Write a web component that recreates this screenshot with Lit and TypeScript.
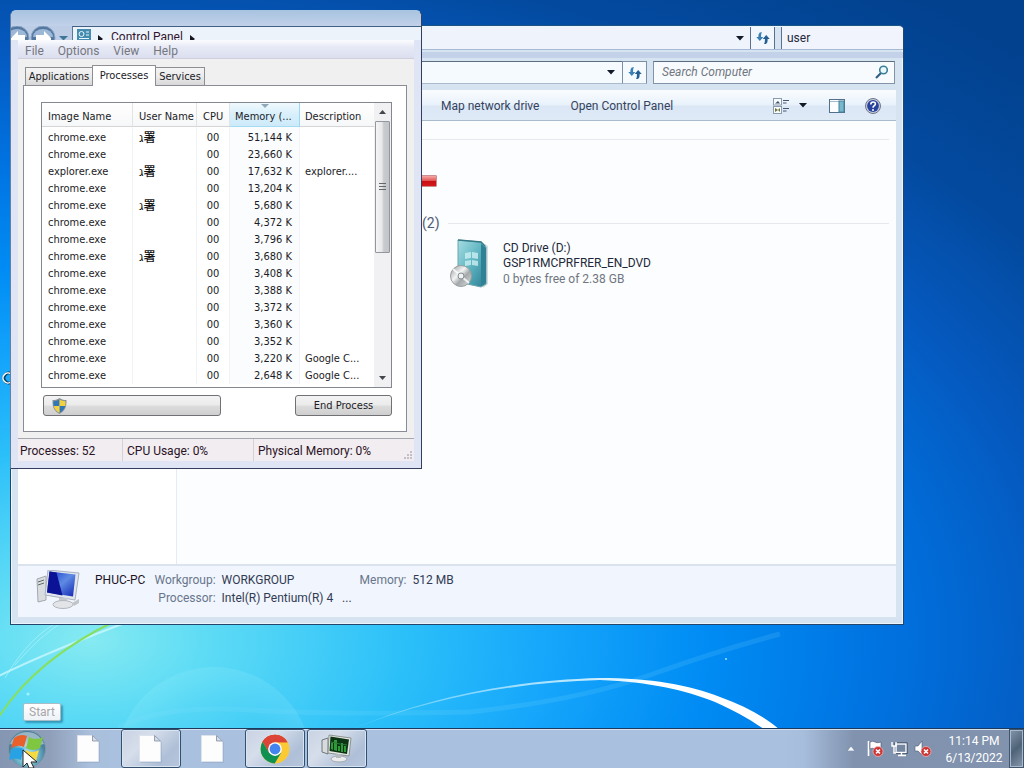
import { LitElement, html, css, svg } from "lit";
import { customElement } from "lit/decorators.js";

interface Proc { image: string; user?: boolean; memory: string; description?: string; }

const processes: Proc[] = [
  { image: "chrome.exe", user: true, memory: "51,144 K" },
  { image: "chrome.exe", memory: "23,660 K" },
  { image: "explorer.exe", user: true, memory: "17,632 K", description: "explorer...." },
  { image: "chrome.exe", memory: "13,204 K" },
  { image: "chrome.exe", user: true, memory: "5,680 K" },
  { image: "chrome.exe", memory: "4,372 K" },
  { image: "chrome.exe", memory: "3,796 K" },
  { image: "chrome.exe", user: true, memory: "3,680 K" },
  { image: "chrome.exe", memory: "3,408 K" },
  { image: "chrome.exe", memory: "3,388 K" },
  { image: "chrome.exe", memory: "3,372 K" },
  { image: "chrome.exe", memory: "3,360 K" },
  { image: "chrome.exe", memory: "3,352 K" },
  { image: "chrome.exe", memory: "3,220 K", description: "Google C..." },
  { image: "chrome.exe", memory: "2,648 K", description: "Google C..." },
];

const caret = html`<svg width="8" height="5" viewBox="0 0 8 5" aria-hidden="true"><path d="M0 0h8L4 4.5z" fill="#111827"/></svg>`;
const refresh = html`<svg width="14" height="14" viewBox="0 0 14 14" aria-hidden="true">
  <path d="M6 1.200C3 .8 2.200 3 2.400 6H.3l3.500 4 3.500-4H5.100c-.1-2 0-3.400.9-4.800z" fill="#3a80b4"/>
  <path d="M8 13c3 .4 3.800-1.800 3.600-5h2.100l-3.500-4-3.500 4h2.200c.1 2 0 3.600-.9 5z" fill="#235f94"/></svg>`;
const blankPage = html`<svg width="24" height="28" viewBox="0 0 24 28" aria-hidden="true">
  <path d="M1.500 1.500H16L22.500 7v20.500h-21z" fill="#8296b4" opacity=".6"/>
  <path d="M.5.5H15.500L21.500 6v20.500H.5z" fill="#fdfdfe" stroke="#dde3ec"/>
  <path d="M15.500.5V6h6z" fill="#d5dde9" stroke="#7d8da5" stroke-width=".8"/></svg>`;
const redCross = svg`<circle cx="12" cy="11.500" r="5" fill="#cf3535" stroke="#f0c0c0" stroke-width=".7"/><path d="M10 9.500l4 4m0-4l-4 4" stroke="#fff" stroke-width="1.600"/>`;

@customElement("desktop-wallpaper")
class DesktopWallpaper extends LitElement {
  static styles = css`
    :host { display: block; width: 100%; height: 100%; overflow: hidden;
      background: radial-gradient(ellipse 1120px 680px at 90px 640px, #86eaf1 0, #5fdcf5 10%, #2cc0f9 28%, #16a6fb 41%, #008cf4 55%, #0072e0 71%, #0558bd 88%, #034a9f 102%, #02418e 120%); }
    svg { display: block; width: 100%; height: 100%; }
  `;
  render() {
    return html`<svg viewBox="0 0 1024 728" preserveAspectRatio="xMinYMax slice" fill="none" aria-hidden="true">
      <defs>
        <linearGradient id="arc" x1="350" y1="0" x2="780" y2="0" gradientUnits="userSpaceOnUse"><stop stop-color="#fff" stop-opacity=".15"/><stop offset=".5" stop-color="#dff8ff" stop-opacity=".8"/><stop offset=".7" stop-color="#fff"/></linearGradient>
        <radialGradient id="dome" cx="214" cy="765" r="98" gradientUnits="userSpaceOnUse"><stop offset=".6" stop-color="#aef4ff" stop-opacity="0"/><stop offset="1" stop-color="#aef4ff" stop-opacity=".15"/></radialGradient>
      </defs>
      <ellipse cx="214" cy="765" rx="98" ry="98" fill="url(#dome)"/>
      <path d="M-5 678Q40 655 135 619" stroke="#d5fbff" stroke-width="2" opacity=".7"/>
      <path d="M5 678Q30 635 62 620M15 665Q40 635 66 620" stroke="#c8f8ff" opacity=".5"/>
      <path d="M-2 718Q35 660 115 621" stroke="#87df62" stroke-width="2"/>
      <path d="M118 728Q160 705 250 710T470 712Q580 700 650 675T780 634" stroke="#8fe0ff" stroke-width="5" opacity=".14"/>
      <path d="M345 732C430 695 520 680 600 678C650 678 690 685 720 697C745 706 765 717 780 730L768 732C750 719 735 711 715 702C685 690 650 682 600 680C520 682 430 697 345 732z" fill="url(#arc)"/>
      <circle cx="726" cy="659" r="1" fill="#a5e2ff"/><circle cx="28" cy="694" r="1.500" fill="#a5f2ff"/>
      <path d="M12 374a5 5 0 1 0 0 8" stroke="#0b3f60" stroke-width="3"/><path d="M11 374a5 5 0 1 0 0 8" stroke="#fff" stroke-width="1.500"/>
    </svg>`;
  }
}

@customElement("explorer-window")
class ExplorerWindow extends LitElement {
  static styles = css`
    :host { display: flex; flex-direction: column; box-sizing: border-box; border: 1px solid #24456c; border-top-color: #1c5584; border-radius: 0 5px 0 0; background: #d6e3f1; box-shadow: inset 0 0 0 1px #eaf5fc; font: 12px/16px Roboto, sans-serif; color: #1e2939; overflow: hidden; }
    button, input { font: inherit; color: inherit; margin: 0; border: 0; padding: 0; background: none; }
    button { display: flex; align-items: center; justify-content: center; }
    .ghost { display: flex; height: 22px; margin-top: 1px; flex: none; border-bottom: 1px solid #a6b9d5; }
    .field { flex: 1; display: flex; justify-content: flex-end; background: #eff3fc; }
    .caret { width: 23px; }
    .reload { width: 25px; border-left: 1px solid #5a718e; border-right: 1px solid #5a718e; background: #f2f6fd; box-sizing: border-box; }
    .user { width: 122px; box-sizing: border-box; margin-left: 6px; padding: 0 5px; background: #f1f4fd; border-left: 1px solid #5a718e; outline: 0; }
    .ghost .reload { margin-left: -1px; }
    .band { height: 6px; flex: none; background: #c3d2e9; margin-top: 2px; }
    .address { display: flex; height: 23px; margin: 3px 8px 6px 8px; flex: none; }
    .address .field { background: #f5fafe; border-top: 1px solid #5d6d80; border-bottom: 1px solid #a9bbcc; }
    .address .reload { border: 1px solid #7d8fa5; border-bottom-color: #a9bbcc; background: #f5fafe; }
    .search { display: flex; align-items: center; width: 242px; box-sizing: border-box; margin-left: 6px; padding: 0 5px 1px 8px; border: 1px solid #8394a8; border-top-color: #5d6d80; background: #f8fbfe; }
    .search input { flex: 1; min-width: 0; font-style: italic; outline: 0; }
    .search input::placeholder { color: #707780; opacity: 1; }
    .tools { display: flex; align-items: center; height: 31px; flex: none; box-sizing: border-box; margin: 0 7px; padding: 0 15px 0 423px; border-top: 1px solid #f9fcff; border-bottom: 1px solid #a8bccd; background: linear-gradient(#f9fcfe, #e8f1fb 48%, #dbe7f5 52%, #dfeaf7); color: #34435e; }
    .tools .gap { flex: 1; }
    .tools .open { margin-left: 31px; }
    .tools .drop { margin: 0 22px 0 9px; }
    .tools .help { margin-left: 20px; }
    .body { display: flex; flex: 1; min-height: 0; margin: 0 7px; background: #fcfdfe; }
    .nav { width: 159px; box-sizing: border-box; border-right: 1px solid #e3ebf4; background: #fff; }
    .pane { flex: 1; padding: 18px 7px 0 0; background: #fcfdfe; }
    .rule { height: 1px; background: #e5e9ed; }
    .usage { display: block; width: 151px; height: 12px; box-sizing: border-box; margin: 35px 0 0 109px; border: 1px solid #c98f91; border-radius: 1px; background: linear-gradient(#f5a8a5, #e2595a 45%, #c80f14 50%, #d3191c); }
    .group { display: flex; align-items: center; gap: 8px; margin: 26px 0 0 245px; font-size: 14px; line-height: 20px; color: #4c5c78; }
    .group .rule { flex: 1; }
    .drive { display: flex; gap: 11px; margin: 5px 0 0 273px; }
    .drive p { margin: 3px 0 0; line-height: 15px; }
    .drive .free { margin: 1px 0 0; color: #707680; }
    .details { display: flex; flex: none; height: 51px; margin: 0 7px 7px; padding-left: 18px; border-top: 2px solid #dae3ee; background: #f1f5fd; color: #313b54; line-height: 18px; }
    .details svg { margin-top: 4px; }
    .name { margin: 5px 9px 0 15px; color: #1d1426; }
    .facts { display: grid; grid-template-columns: auto 132px auto auto; gap: 0 6px; align-content: start; margin: 5px 0 0; }
    .facts dt { color: #68758c; text-align: right; }
    .facts dd { margin: 0; white-space: pre; }
  `;
  render() {
    return html`
      <div class="ghost">
        <div class="field"><button class="caret" aria-label="Previous locations">${caret}</button></div>
        <button class="reload" aria-label="Refresh">${refresh}</button>
        <input class="user" aria-label="Search Control Panel" value="user">
      </div>
      <div class="band"></div>
      <div class="address">
        <div class="field"><button class="caret" aria-label="Previous locations">${caret}</button></div>
        <button class="reload" aria-label="Refresh">${refresh}</button>
        <div class="search"><input aria-label="Search Computer" placeholder="Search Computer">
          <svg width="14" height="14" viewBox="0 0 14 14" aria-hidden="true"><path d="M1 13l5-5" stroke="#2f5f80" stroke-width="2.200"/><circle cx="8.500" cy="5" r="3.800" fill="#eaf8fb" stroke="#3b7f9b" stroke-width="1.600"/></svg>
        </div>
      </div>
      <div class="tools">
        <button>Map network drive</button><button class="open">Open Control Panel</button><span class="gap"></span>
        <button aria-label="Change your view"><svg width="17" height="16" viewBox="0 0 17 16"><rect x=".5" y=".5" width="8" height="6.500" fill="#f8fbff" stroke="#8c9bab"/><path d="M2 5.500h5L5 3z" fill="#3f5270"/><rect x=".5" y="8.500" width="8" height="7" fill="#f8fbff" stroke="#8c9bab"/><path d="M2 10v4l3-2 2 2v-4l-2 2z" fill="#6c7335"/><path d="M10 2.500h6M10 5h3.500M10 10.500h6M10 13h3.500" stroke="#46566e"/></svg></button>
        <button class="drop" aria-label="More view options">${caret}</button>
        <button aria-label="Show the preview pane"><svg width="16" height="14" viewBox="0 0 16 14"><rect x=".5" y=".5" width="15" height="13" fill="#fbfdff" stroke="#52708a"/><path d="M1 2.500h14" stroke="#a5bacd"/><rect x="10" y="2" width="5" height="11" fill="#77b8cb" stroke="#46809b"/></svg></button>
        <button class="help" aria-label="Get help"><svg width="16" height="16" viewBox="0 0 16 16"><circle cx="8" cy="8" r="7.500" fill="#c8cede" stroke="#6d7588"/><circle cx="8" cy="8" r="5.900" fill="#28439b"/><path d="M5.800 6.400c0-3.400 4.700-3 4.600-.4C10.300 7.800 8 7.600 8 9.800" stroke="#fff" stroke-width="1.600" fill="none"/><circle cx="8" cy="12" r="1" fill="#fff"/></svg></button>
      </div>
      <div class="body">
        <div class="nav"></div>
        <div class="pane">
          <div class="rule"></div>
          <span class="usage"></span>
          <div class="group"><span>(2)</span><span class="rule"></span></div>
          <div class="drive">
            <svg width="42" height="52" viewBox="0 0 42 52" aria-hidden="true">
              <defs><linearGradient id="case" x2="1" y2="1"><stop stop-color="#a5dde2"/><stop offset=".5" stop-color="#5fb4c1"/><stop offset="1" stop-color="#2a7d92"/></linearGradient>
              <linearGradient id="disc" x2="1" y2="1"><stop stop-color="#8f9396"/><stop offset=".4" stop-color="#f3f4f4"/><stop offset=".6" stop-color="#a4a8aa"/><stop offset="1" stop-color="#dfe1e2"/></linearGradient></defs>
              <path d="M35 6l3 2v38l-5 4z" fill="#d5dde0"/>
              <path d="M8 2l23 2 5 5v37l-5 3-23-5z" fill="url(#case)" stroke="#6fa5ad"/>
              <path d="M31 6l5 4v35l-5 3z" fill="#2f8195"/>
              <path d="M8 2l23 2 4 4" fill="none" stroke="#357986" stroke-width="1.500"/>
              <path d="M15 15l6-1v6l-6 1zM22 14l6 1v6l-6-1zM15 23l6-1v5l-6 1zM22 22l6 1v5l-6-1z" fill="#d2f3f5" opacity=".75"/>
              <circle cx="11" cy="38" r="10.500" fill="url(#disc)" stroke="#9b9fa1"/><path d="M11 38L3 31M11 38l8 7" stroke="#fff" opacity=".8" stroke-width="2"/><circle cx="11" cy="38" r="3" fill="#eef2f3" stroke="#85898c"/>
            </svg>
            <div><p>CD Drive (D:)<br>GSP1RMCPRFRER_EN_DVD</p><p class="free">0 bytes free of 2.38 GB</p></div>
          </div>
        </div>
      </div>
      <div class="details">
        <svg width="44" height="40" viewBox="0 0 44 40" aria-hidden="true">
          <defs><linearGradient id="scr" x2="1" y2="1"><stop stop-color="#1a28b0"/><stop offset=".3" stop-color="#3f6ada"/><stop offset=".5" stop-color="#5f8be4"/><stop offset="1" stop-color="#1024b0"/></linearGradient></defs>
          <path d="M1 9l9-3v24l-8 2z" fill="#dadddf" stroke="#a4a9ae"/><path d="M2 12l6-2M2 15l6-2" stroke="#5d6a6c"/>
          <path d="M12 0l31 3-4 27-30-5z" fill="#e1e5ec" stroke="#a9b2c0"/><path d="M13.500 1.500l26 3-2.500 22-26-4z" fill="url(#scr)"/><path d="M13.500 1.500l7 1 6 23-15.500-3z" fill="#0b1296"/>
          <path d="M23 28h8v5h-8z" fill="#c5c9ce"/><ellipse cx="27" cy="34.500" rx="10" ry="4" fill="#e2e4e7" stroke="#b3b8be"/><path d="M36 33l7-4v4l-5 3z" fill="#c0c5ca"/>
        </svg>
        <p class="name">PHUC-PC</p>
        <dl class="facts"><dt>Workgroup:</dt><dd>WORKGROUP</dd><dt>Memory:</dt><dd>512 MB</dd><dt>Processor:</dt><dd>Intel(R) Pentium(R) 4   ...</dd></dl>
      </div>`;
  }
}

@customElement("task-manager")
class TaskManager extends LitElement {
  static styles = css`
    :host { display: flex; flex-direction: column; box-sizing: border-box; border: 1px solid #343f5f; border-top-color: #a9c4e0; border-left-color: #65809f; border-radius: 6px 6px 0 0; background: #dfe5f4; font: 11px/17px "DejaVu Sans Condensed", "DejaVu Sans", sans-serif; color: #1c1c26; overflow: hidden; }
    button { font: inherit; color: inherit; margin: 0; border: 0; padding: 0; background: none; }
    .title { height: 15px; background: linear-gradient(#a9c4e0, #c1d1e9); }
    .crumbs { display: flex; height: 14px; overflow: hidden; background: #bccde5; }
    .crumbs > svg { flex: none; }
    .path { display: flex; flex: 1; gap: 7px; padding: 2px 4px; border-top: 1px solid #405f83; border-left: 1px solid #5e7795; background: #edf3fb; font: 12px/16px Roboto, sans-serif; color: #31152e; }
    .path svg { margin-top: 6px; }
    .path .cp { margin-top: 0; }
    .client { display: flex; flex-direction: column; margin: 0 7px 7px; background: #f0f0f0; }
    .menu { display: flex; gap: 14px; height: 18px; padding: 0 7px; background: linear-gradient(#fbfcfe, #e6e9f5 40%, #dcdfef); border-bottom: 1px solid #cfcfe0; font: 12px/20px Roboto, sans-serif; }
    .menu button { color: #75777f; padding-top: 1px; }
    .tabs { display: flex; align-items: flex-end; height: 20px; margin: 6px 0 0 7px; position: relative; }
    .tabs button { height: 18px; box-sizing: border-box; border: 1px solid #8c8e94; border-bottom: 0; background: linear-gradient(#f4f4f4, #ebebeb 50%, #d8d8d8); line-height: 17px; }
    .tabs .on { height: 21px; margin-bottom: -1px; background: #fff; padding-bottom: 2px; width: 64px; }
    .tabs .apps { width: 67px; border-right: 0; } .tabs .svcs { width: 49px; border-left: 0; }
    .page { margin: 0 7px 6px 5px; border: 1px solid #898c95; background: #fff; padding: 16px 14px 15px 17px; }
    .list { display: flex; border: 1px solid #828790; height: 284px; }
    table { flex: 1; border-collapse: separate; border-spacing: 0; table-layout: fixed; width: 0; align-self: flex-start; }
    th { height: 24px; box-sizing: border-box; padding: 3px 0 0 6px; text-align: left; font-weight: 400; white-space: nowrap; border-right: 1px solid #e0e3e8; border-bottom: 1px solid #d5d5d5; background: linear-gradient(#fff, #f6f7f8); }
    th.sort { position: relative; border-right-color: #96d9f9; border-bottom-color: #a5dcf3; background: linear-gradient(#f0f9fd, #d8effb 50%, #cdeaf9); padding-left: 5px; }
    th.sort svg { position: absolute; top: 1px; left: 31px; }
    td { height: 17px; padding: 0 0 0 6px; white-space: nowrap; border-right: 1px solid #f2f3f6; }
    td:last-child, th:last-child { border-right: 0; padding-left: 5px; }
    tbody tr:first-child td { padding-top: 2px; }
    .cpu { padding: 0; text-align: center; }
    .mem { padding: 0 7px 0 0; text-align: right; background: #fbfcfe; }
    .user { font: 12px/16px "DejaVu Sans Condensed", "Noto Sans CJK SC", sans-serif; color: #111; }
    .user b { font-family: "Noto Sans CJK SC", sans-serif; font-weight: 500; }
    .scroll { display: flex; flex-direction: column; align-items: center; width: 17px; background: #f1f1f3; }
    .scroll button { height: 18px; width: 17px; line-height: 0; }
    .thumb { width: 13px; height: 130px; border: 1px solid #92969d; border-radius: 1px; background: linear-gradient(90deg, #f5f5f5, #e8e8ea 45%, #c9cacd 60%, #c4c5c9); display: flex; align-items: center; justify-content: center; }
    .space { flex: 1; }
    .actions { display: flex; justify-content: space-between; margin: 7px 0 0 2px; }
    .actions button { height: 21px; width: 97px; border: 1px solid #6f7175; border-radius: 3px; background: linear-gradient(#f3f3f3, #ebebeb 48%, #dcdcdc 52%, #cfcfcf); box-sizing: border-box; }
    .actions .all { width: 178px; padding-left: 8px; text-align: left; line-height: 0; }
    .status { display: flex; height: 22px; border-top: 1px solid #a5a7ae; background: #f1edf0; font: 12px/24px Roboto, sans-serif; color: #2b1226; white-space: nowrap; }
    .status span { box-sizing: border-box; padding-left: 4px; border-right: 1px solid #d5d1d5; width: 131px; }
    .status span:first-child { width: 105px; padding-left: 2px; }
    .status span:last-of-type { flex: 1; border: 0; }
    .status svg { align-self: flex-end; }
  `;
  render() {
    const arrow = html`<svg width="6" height="8" viewBox="0 0 6 8" aria-hidden="true"><path d="M0 0l5 4-5 4z" fill="#15151f"/></svg>`;
    return html`
      <div class="title"></div>
      <div class="crumbs">
        <svg width="61" height="14" viewBox="0 0 61 14" aria-hidden="true">
          <circle cx="6" cy="12" r="12" fill="#54789f" stroke="#8ca6c8"/><path d="M-4 11a10 8 0 0 1 20 0z" fill="#9cb8d6"/><path d="M0 12l7-7v4h7v5H0z" fill="#fff"/>
          <circle cx="32" cy="12" r="12" fill="#54789f" stroke="#8ca6c8"/><path d="M22 11a10 8 0 0 1 20 0z" fill="#9cb8d6"/><path d="M40 12l-7-7v4h-8v5h15z" fill="#fff"/>
          <path d="M48 10h9l-4 4h-1z" fill="#3f7697"/>
        </svg>
        <div class="path"><svg class="cp" width="14" height="12" viewBox="0 0 14 12" aria-hidden="true"><rect width="14" height="12" fill="#438baf"/><circle cx="4.500" cy="5" r="2.500" fill="none" stroke="#e9f8ff"/><path d="M9 3h3M9 6h3M2 9.500h10" stroke="#e9f8ff"/></svg>${arrow}<span>Control Panel</span>${arrow}</div>
      </div>
      <div class="client">
        <div class="menu"><button>File</button><button>Options</button><button>View</button><button>Help</button></div>
        <div class="tabs" role="tablist"><button role="tab" class="apps">Applications</button><button role="tab" class="on" aria-selected="true">Processes</button><button role="tab" class="svcs">Services</button></div>
        <div class="page">
          <div class="list">
            <table>
              <colgroup><col style="width:91px"><col style="width:64px"><col style="width:33px"><col style="width:70px"><col></colgroup>
              <thead><tr><th>Image Name</th><th>User Name</th><th>CPU</th><th class="sort" aria-sort="descending">Memory (...<svg width="8" height="4" viewBox="0 0 8 4" aria-hidden="true"><path d="M0 0h8L4 4z" fill="#8fa9b8"/></svg></th><th>Description</th></tr></thead>
              <tbody>${processes.map(p => html`<tr><td>${p.image}</td><td class="user">${p.user ? html`ג<b>署</b>` : ""}</td><td class="cpu">00</td><td class="mem">${p.memory}</td><td>${p.description ?? ""}</td></tr>`)}</tbody>
            </table>
            <div class="scroll">
              <button aria-label="Scroll up"><svg width="7" height="4" viewBox="0 0 7 4"><path d="M0 4h7L3.500 0z" fill="#44464d"/></svg></button>
              <div class="thumb"><svg width="7" height="8" viewBox="0 0 7 8"><path d="M0 .5h7M0 3.500h7M0 6.500h7" stroke="#65676e"/></svg></div>
              <span class="space"></span>
              <button aria-label="Scroll down"><svg width="7" height="4" viewBox="0 0 7 4"><path d="M0 0h7L3.500 4z" fill="#44464d"/></svg></button>
            </div>
          </div>
          <div class="actions">
            <button class="all" aria-label="Show processes from all users"><svg width="15" height="16" viewBox="0 0 15 16"><path d="M7.500 0C10 1.800 12 2 14.500 2c.3 7-1.500 11-7 14C2 13 .2 9 .5 2 3 2 5 1.800 7.500 0z" fill="#8a9299"/><path d="M7.500 1.500V8H1.800C1.500 6 1.500 5 1.600 3.200 4 3.200 5.500 2.800 7.500 1.500zM7.500 8h5.700c-.7 3-2.200 5-5.700 6.800z" fill="#2f77b7"/><path d="M7.500 1.500V8h5.700c.3-2 .3-3 .2-4.800-2.400 0-3.900-.4-5.900-1.700zM7.500 8H1.800c.7 3 2.200 5 5.700 6.800z" fill="#f2d33f"/></svg></button>
            <button>End Process</button>
          </div>
        </div>
        <div class="status"><span>Processes: 52</span><span>CPU Usage: 0%</span><span>Physical Memory: 0%</span><svg width="11" height="11" viewBox="0 0 11 11" aria-hidden="true"><path d="M7 1h2v2H7zM4 4h2v2H4zM7 4h2v2H7zM1 7h2v2H1zM4 7h2v2H4zM7 7h2v2H7z" fill="#c2bfc6"/></svg></div>
      </div>`;
  }
}

@customElement("task-bar")
class TaskBar extends LitElement {
  static styles = css`
    :host { display: flex; height: 40px; box-sizing: border-box; border-top: 1px solid #1d3a5c; box-shadow: inset 0 1px #d3e1f1; font: 12px/17px Roboto, sans-serif; color: #fff;
      background: linear-gradient(90deg, #8496b2 0, #8f9fb9 50px, #a9bfdb 90px, #a9c1df 120px, transparent 121px), linear-gradient(270deg, #8193ad 0, #8092ae 170px, #a6bddb 220px, #a9c1df 240px); }
    button { display: flex; align-items: center; justify-content: center; margin: 0; padding: 0; border: 0; background: none; font: inherit; color: inherit; }
    .start { width: 54px; }
    .apps { display: flex; gap: 2px; margin-left: 5px; }
    .apps button { width: 60px; height: 39px; box-sizing: border-box; border-radius: 3px; }
    .apps .open { border: 1px solid #34506f; background: linear-gradient(135deg, #c9d2e3, #d6deeb 35%, #aebfd7 75%, #b5c6dd); box-shadow: inset 0 0 0 1px #d9e4f2; }
    .tray { display: flex; align-items: center; margin-left: auto; }
    .tray button { width: 24px; }
    .tray .clock { display: block; text-align: center; width: 74px; padding: 2px 0 0 4px; }
    .tray .show { width: 15px; align-self: stretch; border: 1px solid #40566f; background: linear-gradient(135deg, #8395ab, #4f6378 50%, #8698ad); box-shadow: inset 0 0 0 1px #a9b8ca; }
  `;
  render() {
    return html`
      <button class="start" aria-label="Start"><svg width="46" height="39" viewBox="0 0 46 39">
        <defs><radialGradient id="orb" cy=".65"><stop stop-color="#b5f0f5"/><stop offset=".6" stop-color="#6fb3cb"/><stop offset="1" stop-color="#477d9b"/></radialGradient></defs>
        <circle cx="23" cy="20" r="18.500" fill="url(#orb)" stroke="#7c98a8"/>
        <path d="M6 15a18 18 0 0 1 34 0q-17 6-34 0z" fill="#e9efee" opacity=".5"/>
        <path d="M10 9q6-5 13-2l-3 11q-6-3-13 1z" fill="#e9602a"/><path d="M25 8q7 4 14 0l-3 11q-7 4-14 0z" fill="#7fc641"/>
        <path d="M7 21q6-4 13-1l-3 11q-6-3-12 0z" fill="#27a2e5"/><path d="M22 21q6 4 13 0l-3 11q-6 4-13 0z" fill="#f5da42"/>
        <path d="M19 21v17l4-4 2 5h5l-3-6h6z" fill="#fff" stroke="#222"/>
      </svg></button>
      <div class="apps">
        <button aria-label="Document">${blankPage}</button><button class="open" aria-label="Document">${blankPage}</button><button aria-label="Document">${blankPage}</button>
        <button class="open" aria-label="Google Chrome"><svg width="30" height="30" viewBox="0 0 48 48"><circle cx="24" cy="24" r="23" fill="#fbc934"/><path d="M24 24L4 12.500A23 23 0 0 1 44 13H24z" fill="#db4437"/><path d="M24 13h20A23 23 0 0 0 4 12.500L14.500 30z" fill="#db4437"/><path d="M4 12.500A23 23 0 0 0 23.500 47L34 29.500 24 34 14.500 29.500z" fill="#109152"/><circle cx="24" cy="24" r="11" fill="#fff"/><circle cx="24" cy="24" r="8.700" fill="#4384ef"/></svg></button>
        <button class="open" aria-label="Windows Task Manager"><svg width="32" height="30" viewBox="0 0 32 30"><path d="M1 6l6-2v16l-6-2z" fill="#d8dbdd" stroke="#70797c"/><path d="M8 1l22 3-2 18-21-3z" fill="#e4e7e3" stroke="#8b9390"/><path d="M9.500 2.500l18.500 3-2 14.500-17.500-3z" fill="#0d3515"/><path d="M10 15V9h2v7zM13 16V6h3v11zM17 17v-5h2v5zM20 18V9h2v9zM23 18v-6h2v6z" fill="#2f9a3a"/><path d="M10 8l5 1 4 1 7 1" stroke="#2a7a35" fill="none"/><ellipse cx="18" cy="25" rx="8" ry="3" fill="#e9ebec" stroke="#a4aaad"/><path d="M15 20h5v4h-5z" fill="#b4babd"/></svg></button>
      </div>
      <div class="tray">
        <button aria-label="Show hidden icons"><svg width="8" height="5" viewBox="0 0 8 5"><path d="M0 5h8L4 0z" fill="#f5f8fc" stroke="#5b6c84" stroke-width=".5"/></svg></button>
        <button aria-label="Action Center"><svg width="18" height="17" viewBox="0 0 18 17"><path d="M2.500 1v15" stroke="#fff" stroke-width="1.600"/><path d="M4 2q3-1.500 5 0t6 0v7q-4 1.500-6 0T4 9z" fill="#fff" stroke="#43536b" stroke-width=".6"/>${redCross}</svg></button>
        <button aria-label="Network"><svg width="17" height="16" viewBox="0 0 17 16"><rect x="5" y="3" width="10" height="8.500" fill="none" stroke="#2c3d54" stroke-width="3"/><rect x="5" y="3" width="10" height="8.500" fill="#7587a0" stroke="#fff" stroke-width="1.400"/><path d="M7 14.500h8M10.500 12v2M1 1v4h4V1M3 5v7h2" stroke="#fff" stroke-width="1.400" fill="none"/></svg></button>
        <button aria-label="Volume"><svg width="18" height="17" viewBox="0 0 18 17"><path d="M1 6h3l4-5v14l-4-4H1z" fill="#fff" stroke="#4c5c73" stroke-width=".6"/>${redCross}</svg></button>
        <button class="clock">11:14 PM<br>6/13/2022</button>
        <button class="show" aria-label="Show desktop"></button>
      </div>`;
  }
}

@customElement("app-root")
class AppRoot extends LitElement {
  static styles = css`
    :host { display: flex; flex-direction: column; height: 100vh; overflow: hidden; }
    .desktop { position: relative; flex: 1; min-height: 0; }
    .explorer { position: absolute; inset: 25px 120px 103px 10px; }
    .manager { position: absolute; left: 10px; top: 10px; width: 412px; }
    .tip { position: absolute; left: 23px; bottom: 7px; box-sizing: border-box; width: 38px; padding: 0 5px; border: 1px solid #a7bdc7; border-radius: 2px; background: linear-gradient(#fff, #eef3f7); box-shadow: 2px 2px 2px #0d54777a; font: 12px/16px Roboto, sans-serif; color: #a8a5ab; }
  `;
  render() {
    return html`<main class="desktop">
        <desktop-wallpaper></desktop-wallpaper>
        <explorer-window class="explorer"></explorer-window>
        <task-manager class="manager"></task-manager>
        <div class="tip" role="tooltip">Start</div>
      </main>
      <task-bar></task-bar>`;
  }
}
